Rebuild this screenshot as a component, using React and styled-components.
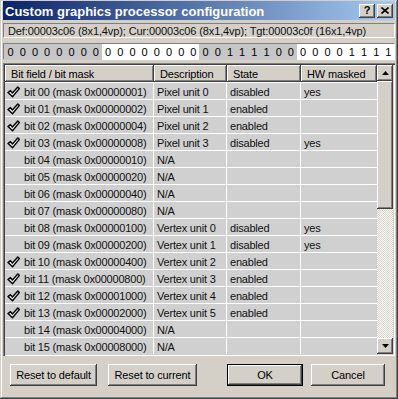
import React from "react";
import styled, { createGlobalStyle, css } from "styled-components";

const Global = createGlobalStyle`
  html, body { margin: 0; padding: 0; background: #d4d0c8; }
  body { font-family: "Liberation Sans", Arial, sans-serif; font-size: 11px; color: #000; }
  * { box-sizing: border-box; }
`;

const raised = css`
  background: #d4d0c8;
  box-shadow: inset -1px -1px #404040, inset 1px 1px #ffffff, inset -2px -2px #808080, inset 2px 2px #d4d0c8;
`;

const Window = styled.div`
  width: 398px;
  height: 399px;
  padding: 1px 3px 3px 3px;
  background: #d4d0c8;
  box-shadow: inset -1px -1px #404040, inset 1px 1px #d4d0c8, inset -2px -2px #808080, inset 2px 2px #ffffff;
  display: flex;
  flex-direction: column;
`;

const TitleBar = styled.div`
  height: 19px;
  display: flex;
  align-items: center;
  padding: 0 2px 0 2px;
  background: linear-gradient(to right, #0a246a, #a6caf0);
`;

const Title = styled.div`
  flex: 1;
  color: #fff;
  font-weight: bold;
  font-size: 13px;
  white-space: nowrap;
  padding-top: 1px;
`;

const CapButtons = styled.div`
  display: flex;
  gap: 2px;
`;

const CapButton = styled.div`
  ${raised};
  width: 16px;
  height: 14px;
  display: flex;
  align-items: center;
  justify-content: center;
  font-weight: bold;
  font-size: 11px;
  line-height: 14px;
  padding-bottom: 1px;
`;

const InfoBox = styled.div`
  margin-top: 3px;
  height: 15px;
  padding: 1px 0 0 4px;
  border: 1px solid;
  border-color: #808080 #ffffff #ffffff #808080;
  line-height: 13px;
  letter-spacing: -0.12px;
  white-space: nowrap;
  overflow: hidden;
  color: #111;
`;

const BitBox = styled.div`
  margin-top: 5px;
  height: 17px;
  border: 1px solid;
  border-color: #808080 #ffffff #ffffff #808080;
  display: grid;
  grid-template-columns: repeat(32, 1fr);
`;

const Bit = styled.div`
  background: ${(p) => (p.$shade ? "#c6c6c6" : "#ffffff")};
  text-align: center;
  line-height: 15px;
  padding: 1px 0 0 1px;
`;

const ListBox = styled.div`
  margin-top: 3px;
  height: 293px;
  padding: 2px;
  display: flex;
  box-shadow: inset 1px 1px #808080, inset 2px 2px #404040, inset -1px -1px #ffffff, inset -2px -2px #d4d0c8;
`;

const Grid = styled.div`
  width: 372px;
  display: grid;
  grid-template-columns: 149px 73px 74px 76px;
  grid-auto-rows: 17px;
  align-content: start;
  background: #d4d0c8;
`;

const HeadCell = styled.div`
  ${raised};
  box-shadow: inset -1px -1px #404040, inset 1px 1px #ffffff, inset -2px -2px #808080;
  padding: 2px 0 0 6px;
  line-height: 15px;
  letter-spacing: -0.15px;
  white-space: nowrap;
  overflow: hidden;
`;

const Cell = styled.div`
  background: #d0d0d0;
  border-top: 1px solid #ffffff;
  border-right: ${(p) => (p.$last ? "0" : "1px solid #ffffff")};
  padding: 2px 0 0 ${(p) => (p.$first ? 2 : 3)}px;
  line-height: 15px;
  letter-spacing: -0.2px;
  white-space: nowrap;
  overflow: hidden;
  display: flex;
  align-items: center;
  gap: 4px;
  color: #111;
`;

const CheckSlot = styled.span`
  width: 13px;
  height: 12px;
  flex: none;
  display: inline-flex;
`;

const ScrollBar = styled.div`
  width: 16px;
  display: flex;
  flex-direction: column;
`;

const ScrollBtn = styled.div`
  ${raised};
  height: 16px;
  flex: none;
  display: flex;
  align-items: center;
  justify-content: center;
`;

const Thumb = styled.div`
  ${raised};
  height: 128px;
  flex: none;
`;

const Track = styled.div`
  flex: 1;
  background: repeating-conic-gradient(#ffffff 0 25%, #d4d0c8 0 50%) 0 0 / 2px 2px;
`;

const ButtonBar = styled.div`
  margin-top: 8px;
  display: flex;
  justify-content: space-between;
  padding: 0 10px 0 7px;
`;

const Group = styled.div`
  display: flex;
  gap: ${(p) => p.$gap}px;
`;

const Button = styled.div`
  ${raised};
  width: ${(p) => p.$w}px;
  height: 22px;
  display: flex;
  align-items: center;
  justify-content: center;
  letter-spacing: -0.15px;
  white-space: nowrap;
  ${(p) =>
    p.$default &&
    css`
      box-shadow: inset 0 0 0 1px #000, inset -2px -2px #404040, inset 2px 2px #ffffff, inset -3px -3px #808080;
    `}
`;

const Check = () => (
  <svg width="13" height="12" viewBox="0 0 13 12">
    <path
      d="M1 6.6 L3.4 4.6 L5.4 7 L10.8 1 L12.3 2.6 L5.5 10.8 Z"
      fill="#ececec"
      stroke="#000"
      strokeWidth="1.4"
      strokeLinejoin="round"
    />
  </svg>
);

const Arrow = ({ up }) => (
  <svg width="7" height="4" viewBox="0 0 7 4">
    <path d={up ? "M3.5 0 L7 4 L0 4 Z" : "M0 0 L7 0 L3.5 4 Z"} fill="#000" />
  </svg>
);

const CloseGlyph = () => (
  <svg width="8" height="7" viewBox="0 0 8 7">
    <path d="M0.5 0.5 L7.5 6.5 M7.5 0.5 L0.5 6.5" stroke="#000" strokeWidth="1.6" />
  </svg>
);

const bitString = "00000000000000000011110000001111";

const desc = {
  0: ["Pixel unit 0", "disabled", "yes", true],
  1: ["Pixel unit 1", "enabled", "", true],
  2: ["Pixel unit 2", "enabled", "", true],
  3: ["Pixel unit 3", "disabled", "yes", true],
  8: ["Vertex unit 0", "disabled", "yes", false],
  9: ["Vertex unit 1", "disabled", "yes", false],
  10: ["Vertex unit 2", "enabled", "", true],
  11: ["Vertex unit 3", "enabled", "", true],
  12: ["Vertex unit 4", "enabled", "", true],
  13: ["Vertex unit 5", "enabled", "", true],
};

const rows = Array.from({ length: 16 }, (_, i) => {
  const d = desc[i] || ["N/A", "", "", false];
  return {
    label: `bit ${String(i).padStart(2, "0")} (mask 0x${(1 << i).toString(16).padStart(8, "0")})`,
    desc: d[0],
    state: d[1],
    hw: d[2],
    checked: d[3],
  };
});

export default function App() {
  return (
    <>
      <Global />
      <Window>
        <TitleBar>
          <Title>Custom graphics processor configuration</Title>
          <CapButtons>
            <CapButton>?</CapButton>
            <CapButton>
              <CloseGlyph />
            </CapButton>
          </CapButtons>
        </TitleBar>
        <InfoBox>Def:00003c06 (8x1,4vp); Cur:00003c06 (8x1,4vp); Tgt:00003c0f (16x1,4vp)</InfoBox>
        <BitBox>
          {bitString.split("").map((b, i) => (
            <Bit key={i} $shade={Math.floor(i / 8) % 2 === 0}>
              {b}
            </Bit>
          ))}
        </BitBox>
        <ListBox>
          <Grid>
            <HeadCell>Bit field / bit mask</HeadCell>
            <HeadCell>Description</HeadCell>
            <HeadCell>State</HeadCell>
            <HeadCell>HW masked</HeadCell>
            {rows.map((r, i) => (
              <React.Fragment key={i}>
                <Cell $first>
                  <CheckSlot>{r.checked && <Check />}</CheckSlot>
                  {r.label}
                </Cell>
                <Cell>{r.desc}</Cell>
                <Cell>{r.state}</Cell>
                <Cell $last>{r.hw}</Cell>
              </React.Fragment>
            ))}
          </Grid>
          <ScrollBar>
            <ScrollBtn>
              <Arrow up />
            </ScrollBtn>
            <Thumb />
            <Track />
            <ScrollBtn>
              <Arrow />
            </ScrollBtn>
          </ScrollBar>
        </ListBox>
        <ButtonBar>
          <Group $gap={11}>
            <Button $w={87}>Reset to default</Button>
            <Button $w={89}>Reset to current</Button>
          </Group>
          <Group $gap={8}>
            <Button $w={76} $default>
              OK
            </Button>
            <Button $w={74}>Cancel</Button>
          </Group>
        </ButtonBar>
      </Window>
    </>
  );
}
